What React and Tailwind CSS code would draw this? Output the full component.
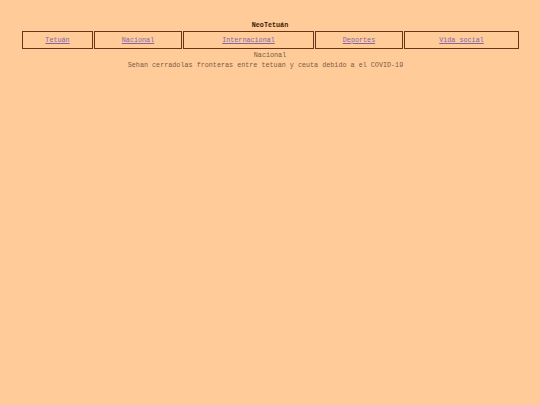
export default function App() {
  const links = [
    ["Tetuán", "w-[71px]"],
    ["Nacional", "w-[88px]"],
    ["Internacional", "w-[131px]"],
    ["Deportes", "w-[88px]"],
    ["Vida social", "w-[115px]"],
  ];
  return (
    <div className="w-[540px] h-[405px] bg-[#ffcc99] text-[6.75px] leading-[9px] text-[#7a5a45] overflow-hidden" style={{ fontFamily: '"Liberation Mono", "Courier New", monospace' }}>
      <div className="pt-[21px] text-center font-bold text-[#3a1a05]">NeoTetuán</div>
      <div className="ml-[22px] mt-px flex gap-px w-[497px]">
        {links.map(([t, w]) => (
          <div key={t} className={`${w} h-[18px] border border-[#6a3414] flex items-center justify-center`}>
            <a href="#" className="underline text-[#8466a8]">{t}</a>
          </div>
        ))}
      </div>
      <div className="mt-[2px] text-center">Nacional</div>
      <div className="mt-px text-center pr-[9px]">Sehan cerradolas fronteras entre tetuan y ceuta debido a el COVID-19</div>
    </div>
  );
}
